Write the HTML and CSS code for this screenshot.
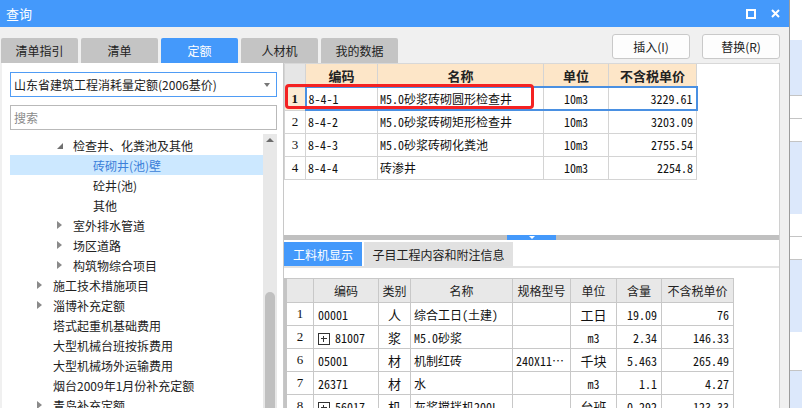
FILE: index.html
```html
<!DOCTYPE html>
<html lang="zh-CN">
<head>
<meta charset="utf-8">
<title>查询</title>
<link rel="stylesheet" href="styles.css">
</head>
<body>
<div class="screen">
  <div class="dialog">
    <div class="titlebar">
      <span class="title">查询</span>
      <span class="tb-icons">
        <span class="ic-max"></span>
        <svg class="ic-close" viewBox="0 0 9 9" width="9" height="9"><path d="M1 1L8 8M8 1L1 8" stroke="#fff" stroke-width="2" fill="none"/></svg>
      </span>
    </div>
    <div class="toolbar">
      <div class="tabs">
        <div class="tab">清单指引</div>
        <div class="tab">清单</div>
        <div class="tab on">定额</div>
        <div class="tab">人材机</div>
        <div class="tab">我的数据</div>
      </div>
      <div class="buttons">
        <button class="btn">插入(I)</button>
        <button class="btn">替换(R)</button>
      </div>
    </div>
    <div class="main">
      <div class="left">
        <div class="select"><span>山东省建筑工程消耗量定额(2006基价)</span><span class="caret"></span></div>
        <div class="search">搜索</div>
        <div class="tree-wrap">
          <div class="tree">
            <div class="row l3"><span class="tg e"></span>检查井、化粪池及其他</div>
            <div class="row l4 sel"><span class="tg"></span>砖砌井(池)壁</div>
            <div class="row l4"><span class="tg"></span>砼井(池)</div>
            <div class="row l4"><span class="tg"></span>其他</div>
            <div class="row l3"><span class="tg c"></span>室外排水管道</div>
            <div class="row l3"><span class="tg c"></span>场区道路</div>
            <div class="row l3"><span class="tg c"></span>构筑物综合项目</div>
            <div class="row l2"><span class="tg c"></span>施工技术措施项目</div>
            <div class="row l2"><span class="tg c"></span>淄博补充定额</div>
            <div class="row l2"><span class="tg"></span>塔式起重机基础费用</div>
            <div class="row l2"><span class="tg"></span>大型机械台班按拆费用</div>
            <div class="row l2"><span class="tg"></span>大型机械场外运输费用</div>
            <div class="row l2"><span class="tg"></span>烟台2009年1月份补充定额</div>
            <div class="row l2"><span class="tg c"></span>青岛补充定额</div>
          </div>
          <div class="vscroll"><span class="up"></span><span class="thumb"></span></div>
        </div>
      </div>
      <div class="right">
        <div class="top-pane">
          <table class="qt">
            <colgroup><col class="c-n"><col class="c-code"><col class="c-name"><col class="c-unit"><col class="c-price"></colgroup>
            <thead>
              <tr><th class="rn"></th><th>编码</th><th>名称</th><th>单位</th><th>不含税单价</th></tr>
            </thead>
            <tbody>
              <tr class="sel"><td class="rn cur">1</td><td>8-4-1</td><td>M5.0砂浆砖砌圆形检查井</td><td class="ctr">10m3</td><td class="num">3229.61</td></tr>
              <tr><td class="rn">2</td><td>8-4-2</td><td>M5.0砂浆砖砌矩形检查井</td><td class="ctr">10m3</td><td class="num">3203.09</td></tr>
              <tr><td class="rn">3</td><td>8-4-3</td><td>M5.0砂浆砖砌化粪池</td><td class="ctr">10m3</td><td class="num">2755.54</td></tr>
              <tr><td class="rn">4</td><td>8-4-4</td><td>砖渗井</td><td class="ctr">10m3</td><td class="num">2254.8</td></tr>
            </tbody>
          </table>
          <div class="annot"></div>
        </div>
        <div class="splitter"><span class="handle"><span class="down"></span></span></div>
        <div class="sub-tabs">
          <div class="stab on">工料机显示</div>
          <div class="stab">子目工程内容和附注信息</div>
        </div>
        <div class="bottom-pane">
          <table class="rt">
            <colgroup><col class="b-n"><col class="b-code"><col class="b-cat"><col class="b-name"><col class="b-spec"><col class="b-unit"><col class="b-qty"><col class="b-price"></colgroup>
            <thead>
              <tr><th class="rn"></th><th>编码</th><th>类别</th><th>名称</th><th>规格型号</th><th>单位</th><th>含量</th><th>不含税单价</th></tr>
            </thead>
            <tbody>
              <tr><td class="rn">1</td><td class="code">00001</td><td class="cat">人</td><td class="nm">综合工日(土建)</td><td></td><td class="ctr cj">工日</td><td class="num">19.09</td><td class="num">76</td></tr>
              <tr><td class="rn">2</td><td class="code"><span class="plus"></span>81007</td><td class="cat">浆</td><td class="nm">M5.0砂浆</td><td></td><td class="ctr">m3</td><td class="num">2.34</td><td class="num">146.33</td></tr>
              <tr><td class="rn">6</td><td class="code">05001</td><td class="cat">材</td><td class="nm">机制红砖</td><td class="spec">240X11…</td><td class="ctr cj">千块</td><td class="num">5.463</td><td class="num">265.49</td></tr>
              <tr><td class="rn">7</td><td class="code">26371</td><td class="cat">材</td><td class="nm">水</td><td></td><td class="ctr">m3</td><td class="num">1.1</td><td class="num">4.27</td></tr>
              <tr><td class="rn">8</td><td class="code"><span class="plus"></span>56017</td><td class="cat">机</td><td class="nm">灰浆搅拌机200L</td><td></td><td class="ctr cj">台班</td><td class="num">0.292</td><td class="num">123.33</td></tr>
            </tbody>
          </table>
        </div>
      </div>
    </div>
  </div>
  <div class="outside">
    <div class="o-white o-top"></div>
    <div class="o-blue o-b1"></div>
    <div class="o-white o-r"></div>
    <div class="o-white o-r"></div>
    <div class="o-blue o-b2"></div>
    <div class="o-white o-r"></div>
    <div class="o-white o-r"></div>
    <div class="o-blue o-b2"></div>
    <div class="o-white o-r2"></div>
    <div class="o-blue o-fill"></div>
  </div>
</div>
</body>
</html>
```
FILE: styles.css
```css
* { box-sizing: border-box; margin: 0; padding: 0; }
html, body { width: 802px; height: 408px; overflow: hidden; }
body {
  font-family: "Noto Sans CJK SC", "Microsoft YaHei", sans-serif;
  font-size: 12px;
  color: #222;
  background: #fff;
}
.screen { display: flex; width: 802px; height: 408px; }

.dialog {
  width: 790px;
  height: 408px;
  flex: none;
  background: #f0f0f0;
  border-right: 1px solid #9c9c9c;
  display: flex;
  flex-direction: column;
}
.titlebar {
  height: 27px;
  flex: none;
  background: #4499fb;
  color: #fff;
  display: flex;
  align-items: center;
  justify-content: space-between;
  padding: 0 9px 0 6px;
}
.title { font-size: 13px; }
.tb-icons { display: flex; align-items: center; gap: 15px; }
.ic-max { width: 10px; height: 10px; border: 2px solid #fff; }
.ic-close { display: block; }

.toolbar {
  height: 36px;
  flex: none;
  display: flex;
  justify-content: space-between;
  padding: 0 9px 0 1px;
}
.tabs { display: flex; gap: 3px; align-self: flex-end; }
.tab {
  width: 77px;
  height: 25px;
  background: #c4c4c4;
  border-radius: 2px 2px 0 0;
  display: flex;
  align-items: center;
  justify-content: center;
  color: #222;
}
.tab.on { background: #4499fb; color: #fff; }
.buttons { display: flex; gap: 12px; padding-top: 7px; }
.btn {
  width: 78px;
  height: 25px;
  background: #fdfdfd;
  border: 1px solid #c9c9c9;
  border-radius: 3px;
  font: 12px "Noto Sans CJK SC", sans-serif;
  color: #222;
}

.main { flex: 1; min-height: 0; display: flex; padding: 0 9px 0 2px; }

/* left */
.left {
  width: 281px;
  flex: none;
  background: #fff;
  padding: 9px 0 0 8px;
  display: flex;
  flex-direction: column;
}
.select {
  width: 267px;
  height: 25px;
  flex: none;
  border: 1px solid #4f9cf5;
  display: flex;
  align-items: center;
  justify-content: space-between;
  padding: 0 6px 0 3px;
  white-space: nowrap;
}
.caret {
  width: 0; height: 0;
  border-left: 3px solid transparent;
  border-right: 3px solid transparent;
  border-top: 4px solid #777;
}
.search {
  width: 267px;
  height: 25px;
  flex: none;
  margin-top: 8px;
  border: 1px solid #b9b9b9;
  display: flex;
  align-items: center;
  padding-left: 3px;
  color: #8a8a8a;
}
.tree-wrap { display: flex; margin-top: 4px; flex: 1; min-height: 0; width: 267px; }
.tree { flex: 1; padding-top: 1px; }
.row { height: 20px; display: flex; align-items: center; white-space: nowrap; color: #222; }
.row.sel { background: #cce8ff; color: #3b7fd9; }
.l2 { padding-left: 23px; }
.l3 { padding-left: 43px; }
.l4 { padding-left: 63px; }
.tg { width: 20px; height: 20px; flex: none; display: flex; align-items: center; padding-left: 4px; }
.tg.c::before {
  content: "";
  border-top: 4px solid transparent;
  border-bottom: 4px solid transparent;
  border-left: 5px solid #8a8a8a;
}
.tg.e::before {
  content: "";
  border-left: 6px solid transparent;
  border-bottom: 6px solid #707070;
  margin-top: 2px;
}
.vscroll {
  width: 14px;
  flex: none;
  background: #e8e8e8;
  display: flex;
  flex-direction: column;
  align-items: center;
  padding-top: 4px;
}
.up {
  width: 0; height: 0; flex: none;
  border-left: 4px solid transparent;
  border-right: 4px solid transparent;
  border-bottom: 4px solid #6c6c6c;
}
.thumb {
  width: 10px;
  flex: 1;
  margin-top: 150px;
  background: #c0c0c0;
  border-radius: 5px 5px 0 0;
}

/* right */
.right {
  width: 497px;
  flex: none;
  background: #fff;
  border-left: 1px solid #c8c8c8;
  border-right: 1px solid #d0d0d0;
  display: flex;
  flex-direction: column;
}
.top-pane { height: 172px; flex: none; position: relative; border-top: 1px solid #d8d8d8; }
table { border-collapse: collapse; table-layout: fixed; }
.qt { width: 412px; font-family: "Noto Sans Mono CJK SC", "Liberation Mono", "Noto Sans CJK SC", monospace; font-size: 12px; }
.c-n { width: 21px; } .c-code { width: 72px; } .c-name { width: 166px; } .c-unit { width: 65px; } .c-price { width: 88px; }
.qt th, .qt td { border: 1px solid #d4d4d4; height: 23px; padding: 0 2px; white-space: nowrap; overflow: hidden; }
.qt tr:first-child th { border-top: none; }
.qt th {
  background: #fde6c8;
  font-family: "Noto Sans CJK SC", sans-serif;
  font-weight: 700;
  font-size: 13px;
  color: #222;
}
.qt th.rn { background: #e6e6e6; }
.qt td { color: #111; }
.rn { text-align: center; font-family: "Liberation Serif", serif; font-size: 13px; padding: 0 !important; }
.qt td.rn.cur { background: #fcebd4; font-weight: 700; }
.ctr { text-align: center; }
.num { text-align: right; padding-right: 3px !important; }
.qt tr.sel td:not(.rn) { border-top: 2px solid #4a90e2; border-bottom: 2px solid #4a90e2; }
.qt tr.sel td:nth-child(2) { border-left: 2px solid #4a90e2; }
.qt tr.sel td:last-child { border-right: 2px solid #4a90e2; }
.annot {
  position: absolute;
  left: 1px;
  top: 20px;
  width: 249px;
  height: 25px;
  border: 3px solid #f42222;
  border-radius: 4px;
}

.splitter { height: 5px; flex: none; background: #c0c0c0; display: flex; }
.handle {
  margin-left: 223px;
  width: 49px;
  height: 5px;
  background: #4499fb;
  display: flex;
  justify-content: center;
  align-items: center;
}
.down {
  width: 0; height: 0;
  border-left: 3px solid transparent;
  border-right: 3px solid transparent;
  border-top: 3px solid #fff;
}
.sub-tabs {
  margin-top: 2px;
  height: 26px;
  flex: none;
  display: flex;
  gap: 2px;
  border-bottom: 2px solid #e2e2e2;
}
.stab {
  height: 24px;
  padding: 0 8px;
  background: #e1e1e1;
  display: flex;
  align-items: center;
  justify-content: center;
  color: #222;
  width: 149px;
}
.stab.on { background: #4499fb; color: #fff; width: 78px; }
.bottom-pane { flex: 1; padding-top: 10px; }
.rt { width: 448px; font-family: "Noto Sans Mono CJK SC", "Liberation Mono", "Noto Sans CJK SC", monospace; font-size: 12px; }
.b-n { width: 28px; } .b-code { width: 65px; } .b-cat { width: 32px; } .b-name { width: 102px; }
.b-spec { width: 58px; } .b-unit { width: 46px; } .b-qty { width: 45px; } .b-price { width: 72px; }
.rt th, .rt td { border: 1px solid #c8c8c8; height: 23px; padding: 0 3px; white-space: nowrap; overflow: hidden; }
.rt th {
  height: 24px;
  background: #e8e8e8;
  font-family: "Noto Sans CJK SC", sans-serif;
  font-weight: 400;
  font-size: 12px;
  color: #222;
}
.rt th:first-child, .rt td:first-child { border-left: 3px solid #c4c4c4; }
.rt td { color: #111; }
.rt td.code { padding-left: 4px; }
.rt td.cat, .rt td.cj { text-align: center; font-family: "Noto Sans CJK SC", sans-serif; font-size: 13px; }
.rt td.num { padding-right: 4px !important; }
.plus {
  display: inline-block;
  width: 12px;
  height: 12px;
  border: 1px solid #333;
  margin-right: 5px;
  vertical-align: -2px;
  position: relative;
}
.plus::before { content: ""; position: absolute; left: 2px; top: 4px; width: 6px; height: 1px; background: #333; }
.plus::after { content: ""; position: absolute; left: 4px; top: 2px; width: 1px; height: 6px; background: #333; }

/* background app strip */
.outside { flex: 1; display: flex; flex-direction: column; background: #fff; }
.o-white { background: #fff; border-bottom: 1px solid #c4c4c4; flex: none; }
.o-blue { background: #dce8fb; flex: none; }
.o-top { height: 40px; border-bottom: none; }
.o-b1 { height: 56px; border-bottom: 1px solid #c4c4c4; }
.o-r { height: 23px; }
.o-b2 { height: 72px; }
.o-r2 { height: 39px; }
.o-fill { flex: 1; }
```
